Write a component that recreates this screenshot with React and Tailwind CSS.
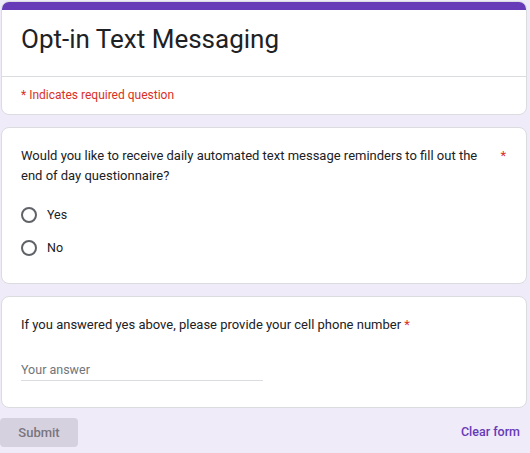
import React, { useState } from "react";

const options = ["Yes", "No"];

const Card = ({ children, className = "" }) => (
  <div
    className={`bg-white rounded-lg border border-[#dadce0] ${className}`}
  >
    {children}
  </div>
);

const App = () => {
  const [choice, setChoice] = useState("");
  const [phone, setPhone] = useState("");

  return (
    <div
      className="w-[530px] h-[453px] bg-[#f0ebf8] pt-[1px] pl-[1px] pr-[3px] flex flex-col overflow-hidden text-[#202124]"
      style={{ fontFamily: "Roboto, 'Liberation Sans', sans-serif" }}
    >
      <Card className="overflow-hidden">
        <div className="h-[8px] bg-[#673ab7]" />
        <div className="pl-[19px] pr-5 pt-[13px] pb-[21px]">
          <h1 className="text-[26px] leading-[32px] text-[#202124]">
            Opt-in Text Messaging
          </h1>
        </div>
        <div className="border-t border-[#dadce0] pl-[19px] pr-5 pt-[8px] pb-[9px]">
          <p className="text-[12px] leading-[20px] text-[#d93025]">
            * Indicates required question
          </p>
        </div>
      </Card>

      <Card className="mt-[12px] pl-[19px] pr-[20px] pt-[18px] pb-[19px]">
        <div className="flex items-start">
          <p className="flex-1 text-[13px] leading-[20px]">
            Would you like to receive daily automated text message reminders to
            fill out the end of day questionnaire?
          </p>
          <span className="shrink-0 ml-[4px] text-[#d93025] text-[13px] leading-[20px]">
            *
          </span>
        </div>
        <div className="mt-[12px]">
          {options.map((opt) => (
            <label
              key={opt}
              className="h-[33px] flex items-center gap-[10px] cursor-pointer"
            >
              <span
                className="w-[16px] h-[16px] rounded-full border-2 border-[#5f6368] flex items-center justify-center"
                onClick={() => setChoice(opt)}
              >
                {choice === opt ? (
                  <span className="w-[8px] h-[8px] rounded-full bg-[#673ab7]" />
                ) : null}
              </span>
              <span className="text-[12.5px] leading-[20px]">{opt}</span>
            </label>
          ))}
        </div>
      </Card>

      <Card className="mt-[12px] pl-[19px] pr-5 pt-[18px] pb-[26px]">
        <p className="text-[13px] leading-[20px]">
          If you answered yes above, please provide your cell phone number{" "}
          <span className="text-[#d93025]">*</span>
        </p>
        <input
          value={phone}
          onChange={(e) => setPhone(e.target.value)}
          placeholder="Your answer"
          className="mt-[24px] block w-[242px] h-[22px] text-[12.5px] leading-[20px] border-b border-[#dadce0] outline-none placeholder:text-[#70757a]"
        />
      </Card>

      <div className="mt-[10px] -ml-[1px] flex items-center justify-between pr-[7px]">
        <button
          disabled
          className="w-[78px] h-[29px] rounded bg-[#d6d1de] text-[13px] font-medium text-[#79757e]"
        >
          Submit
        </button>
        <button className="text-[12.5px] font-medium text-[#673ab7]">
          Clear form
        </button>
      </div>
    </div>
  );
};

export default App;
